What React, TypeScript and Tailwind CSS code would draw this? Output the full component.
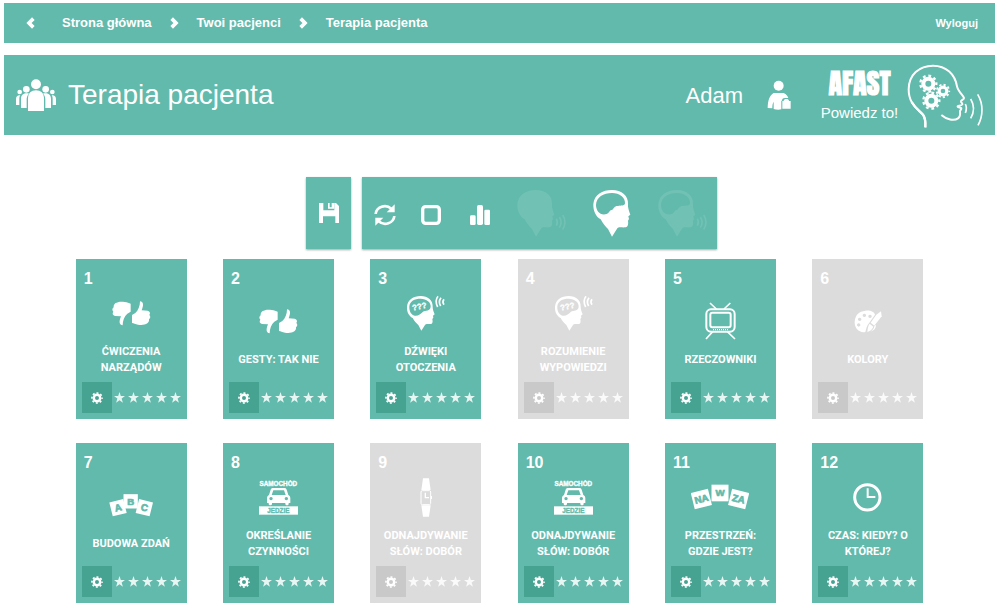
import { Fragment, type ReactNode } from "react";
import clsx from "clsx";

/* ── Icons ── */

function Chevron({ back }: { back?: boolean }) {
  return (
    <svg
      viewBox="0 0 27 36"
      className={clsx("h-3 w-[9px]", back && "rotate-180")}
      aria-hidden="true"
    >
      <path
        d="M5 5l13 13L5 31"
        fill="none"
        stroke="currentColor"
        strokeWidth="11"
      />
    </svg>
  );
}

function Gear({
  cx,
  cy,
  r,
  hole,
  teeth = 8,
}: {
  cx: number;
  cy: number;
  r: number;
  hole: number;
  teeth?: number;
}) {
  const body = r * 0.78;
  return (
    <g fill="none" stroke="currentColor">
      <circle
        cx={cx}
        cy={cy}
        r={(body + hole) / 2}
        strokeWidth={body - hole}
      />
      <circle
        cx={cx}
        cy={cy}
        r={(body + r) / 2}
        strokeWidth={r - body + 1}
        pathLength={teeth * 2}
        strokeDasharray="1 1"
        strokeDashoffset="0.5"
      />
    </g>
  );
}

function PeopleIcon() {
  return (
    <svg
      viewBox="48 236 120 96"
      className="h-8 w-10"
      fill="currentColor"
      aria-hidden="true"
    >
      <circle cx="108" cy="252" r="15" />
      <path d="M84 332V296c0-18 10-26 24-26s24 8 24 26v36z" />
      <circle cx="79" cy="267" r="10" />
      <circle cx="137" cy="267" r="10" />
      <path d="M63 323v-27c0-12 8-17 17-17 3 0 5 0 7 1-5 5-7 11-7 18v25z" />
      <path d="M153 323v-27c0-12-8-17-17-17-3 0-5 0-7 1 5 5 7 11 7 18v25z" />
      <circle cx="59" cy="275" r="7" />
      <circle cx="157" cy="275" r="7" />
      <path d="M48 314v-18c0-8 5-12 13-11-2 3-3 6-3 11v18z" />
      <path d="M168 314v-18c0-8-5-12-13-11 2 3 3 6 3 11v18z" />
    </svg>
  );
}

function PatientIcon() {
  return (
    <svg
      viewBox="289 241 72 90"
      className="h-[30px] w-6"
      fill="currentColor"
      aria-hidden="true"
    >
      <circle cx="324" cy="258" r="15" />
      <path d="M291 325c0-22 6-39 18-45h30c8 4 12 9 14 15h-10c-7 0-9 4-9 8h-2v26c-9 2-15 1-23-1v-22c-3 5-4 11-4 20z" />
      <path d="M335 304h4c0-8 16-8 16 0h5v23h-25z" />
    </svg>
  );
}

function LogoHead() {
  return (
    <svg
      viewBox="712 185 231 195"
      className="h-[65px] w-[77px]"
      fill="none"
      stroke="currentColor"
      aria-hidden="true"
    >
      <path
        d="M767 378c1-16 0-28-7-38-11-12-24-20-34-38-7-12-9-24-9-38 0-44 32-71 73-71 40 0 66 26 72 62 3 16 20 28 21 35 0 6-10 6-9 11 1 4 5 4 4 8-2 4-16 5-14 7 2 3 12 2 11 6-1 5-5 5-4 10 1 8 2 14-6 19-12 8-34 4-50-10"
        strokeWidth="6"
        strokeLinejoin="round"
      />
      <path
        d="M767 378c1-16 0-28-7-38-11-12-24-20-34-38"
        strokeWidth="7"
      />
      <path d="M887 308c4 8 4 18 0 27" strokeWidth="5" />
      <path d="M903 293c11 18 11 39 0 58" strokeWidth="5" />
      <path d="M924 279c17 28 17 64 1 93" strokeWidth="5" />
      <Gear cx={776} cy={247} r={27} hole={9} teeth={9} />
      <Gear cx={820} cy={269} r={21} hole={7} teeth={9} />
      <Gear cx={785} cy={298} r={27} hole={9} teeth={9} />
    </svg>
  );
}

function SaveIcon() {
  return (
    <svg
      viewBox="0 0 60 60"
      className="h-5 w-5"
      fill="currentColor"
      aria-hidden="true"
    >
      <path d="M0 0h13v22h33V0h5l9 9v51H49V40H12v20H0z" />
      <path d="M27 0h5v17h-5zM32 13h9v4h-9zM38 0h8v17h-8z" />
    </svg>
  );
}

function RefreshIcon() {
  return (
    <svg
      viewBox="0 0 66 66"
      className="h-[22px] w-[22px]"
      fill="none"
      stroke="currentColor"
      strokeWidth="8"
      aria-hidden="true"
    >
      <path d="M5 30C7 8 35-1 52 14" />
      <path d="M61 36C59 58 31 67 14 52" />
      <path d="M62 1v24H38z" fill="currentColor" stroke="none" />
      <path d="M4 65V41h24z" fill="currentColor" stroke="none" />
    </svg>
  );
}

function SquareIcon() {
  return (
    <svg viewBox="0 0 60 60" className="h-5 w-5" aria-hidden="true">
      <rect
        x="5"
        y="5"
        width="50"
        height="50"
        rx="9"
        fill="none"
        stroke="currentColor"
        strokeWidth="10"
      />
    </svg>
  );
}

function BarsIcon() {
  return (
    <svg
      viewBox="0 0 60 60"
      className="h-5 w-5"
      fill="currentColor"
      aria-hidden="true"
    >
      <rect x="0" y="31" width="17" height="29" rx="4" />
      <rect x="21" y="0" width="18" height="60" rx="5" />
      <rect x="43" y="14" width="17" height="46" rx="4" />
    </svg>
  );
}

const HEAD =
  "M60 143L48 120C40 112 33 105 26 91C12 84 3 65 4 45C7 17 31 3 60 3C89 3 110 20 108 46C107 56 111 66 115 77L109 82L111 90L108 95C110 109 106 115 99 115C90 116 80 112 76 118Z";
const BRAIN =
  "M44 75C25 81 12 66 12 48C13 24 34 12 60 12C83 12 100 26 99 43C98 52 86 49 78 51C68 50 66 58 60 63C52 62 53 72 44 75Z";

function HeadIcon({
  brain,
  waves,
}: {
  brain?: boolean;
  waves?: boolean;
}) {
  return (
    <svg
      viewBox={waves ? "0 0 150 147" : "0 0 117 147"}
      className={clsx("h-[49px]", waves ? "w-[50px]" : "w-[39px]")}
      aria-hidden="true"
    >
      <path
        d={brain ? HEAD + BRAIN : HEAD}
        fill="currentColor"
        fillRule="evenodd"
      />
      {waves && (
        <g fill="none" stroke="currentColor" strokeWidth="5">
          <path d="M121 89c4 7 4 14 0 21" />
          <path d="M130 84c7 10 7 21 0 32" />
          <path d="M140 78c9 14 9 29 0 43" />
        </g>
      )}
    </svg>
  );
}

function ThumbsIcon() {
  const thumb =
    "M60 42L70 36C79 28 84 15 84 1C94 1 96 12 89 28L107 29C114 31 116 37 112 42C116 46 116 51 111 55C112 61 109 64 106 67C99 72 88 73 78 71C70 70 65 67 60 66Z";
  return (
    <svg
      viewBox="0 0 117 75"
      className="h-[25px] w-[39px]"
      fill="currentColor"
      aria-hidden="true"
    >
      <path d={thumb} />
      <path d={thumb} transform="rotate(180 58 37)" />
    </svg>
  );
}

function QuestionHeadIcon() {
  return (
    <svg viewBox="0 0 117 108" className="h-9 w-[39px]" aria-hidden="true">
      <path
        d="M46 107L37 90C31 83 25 80 20 69C8 62 2 50 3 35C5 14 22 3 44 3C66 3 81 16 80 35C80 43 83 51 86 58L81 62L82 68L79 72C81 83 79 87 73 87C66 88 61 85 57 90ZM26 62C15 60 9 48 10 34C12 18 25 11 44 11C62 11 75 22 74 35C73 49 58 45 51 50C44 56 36 64 26 62Z"
        fill="currentColor"
        fillRule="evenodd"
      />
      <text
        x="18"
        y="43"
        fontSize="24"
        fontWeight="700"
        fill="currentColor"
        stroke="currentColor"
        strokeWidth="1"
        transform="rotate(-12 40 36)"
      >
        ???
      </text>
      <g fill="none" stroke="currentColor" strokeWidth="5">
        <path d="M96 4c-7 9-7 21-1 32" />
        <path d="M105 8c-6 8-6 17-1 25" />
        <path d="M114 13c-4 5-4 11 0 16" />
      </g>
    </svg>
  );
}

function TvIcon() {
  return (
    <svg
      viewBox="0 0 93 114"
      className="h-[38px] w-[31px]"
      fill="none"
      stroke="currentColor"
      aria-hidden="true"
    >
      <rect x="4" y="22" width="85" height="67" rx="14" strokeWidth="6" />
      <rect x="16" y="32" width="61" height="44" rx="6" strokeWidth="6" />
      <path d="M15 3l19 18M76 3L57 21M23 89L3 111M67 89l23 22" strokeWidth="5" />
      <path d="M24 83h46" strokeWidth="4" strokeDasharray="3 3" />
    </svg>
  );
}

function PaletteIcon() {
  return (
    <svg
      viewBox="0 0 84 69"
      className="h-[23px] w-7"
      fill="currentColor"
      aria-hidden="true"
    >
      <path
        fillRule="evenodd"
        d="M34 2C50 0 61 6 63 14L46 38C38 46 36 58 34 66C16 70 1 55 2 36C3 15 15 4 34 2ZM17 23a5 5 0 1 0 .1 0zM31 11a5 5 0 1 0 .1 0zM48 14a5 5 0 1 0 .1 0zM14 40a5 5 0 1 0 .1 0z"
      />
      <path d="M67 14L81 4l2 15-22 28-11-9z" />
      <path d="M47 41l11 9c-4 9-10 13-18 16 1-10 2-18 7-25z" />
      <path d="M66 44c0 11-6 17-16 21 7-5 10-10 11-16z" />
    </svg>
  );
}

function LetterTile({
  x,
  y,
  w,
  h,
  turn = 0,
  children,
}: {
  x: number;
  y: number;
  w: number;
  h: number;
  turn?: number;
  children: string;
}) {
  return (
    <g transform={`translate(${x} ${y}) rotate(${turn})`}>
      <rect x={-w / 2} y={-h / 2} width={w} height={h} fill="currentColor" />
      <text
        y="10"
        textAnchor="middle"
        fontSize="29"
        fontWeight="900"
        strokeWidth="2"
        className="fill-[#61baac] stroke-[#61baac]"
      >
        {children}
      </text>
    </g>
  );
}

function AbcIcon() {
  return (
    <svg viewBox="0 0 132 72" className="h-6 w-11" aria-hidden="true">
      <LetterTile x={27} y={44} w={43} h={43} turn={-14}>
        A
      </LetterTile>
      <LetterTile x={106} y={44} w={43} h={43} turn={14}>
        C
      </LetterTile>
      <LetterTile x={65} y={25} w={43} h={43}>
        B
      </LetterTile>
    </svg>
  );
}

function PlaceIcon() {
  return (
    <svg viewBox="0 0 174 78" className="h-[26px] w-[58px]" aria-hidden="true">
      <LetterTile x={31} y={45} w={53} h={50} turn={-14}>
        NA
      </LetterTile>
      <LetterTile x={143} y={45} w={53} h={50} turn={14}>
        ZA
      </LetterTile>
      <LetterTile x={87} y={27} w={51} h={50}>
        W
      </LetterTile>
    </svg>
  );
}

function CarIcon() {
  return (
    <svg
      viewBox="0 0 117 105"
      className="h-[35px] w-[39px]"
      fill="currentColor"
      aria-hidden="true"
    >
      <text
        x="58"
        y="17"
        textAnchor="middle"
        fontSize="19"
        fontWeight="900"
        stroke="currentColor"
        strokeWidth="1"
      >
        SAMOCHÓD
      </text>
      <path
        fillRule="evenodd"
        d="M42 24h34c4 0 6 2 7 5l5 16c5 3 6 6 6 10v14h-5v3c0 5-10 5-10 0v-3H39v3c0 5-10 5-10 0v-3h-5V55c0-4 1-7 6-10l5-16c1-3 3-5 7-5zM43 31l-5 14h42l-5-14zM36 51a5 5 0 1 0 .1 0zM82 51a5 5 0 1 0 .1 0z"
      />
      <rect x="0" y="79" width="117" height="25" />
      <text
        x="58"
        y="98"
        textAnchor="middle"
        fontSize="19"
        fontWeight="900"
        className="fill-[#61baac] stroke-[#61baac]"
      >
        JEDZIE
      </text>
    </svg>
  );
}

function WatchIcon() {
  return (
    <svg
      viewBox="0 0 36 117"
      className="h-[39px] w-3"
      fill="currentColor"
      aria-hidden="true"
    >
      <path d="M9 1h18l5 35H4zM4 82h28l-5 34H9z" />
      <rect
        x="3"
        y="38"
        width="29"
        height="42"
        rx="4"
        fill="none"
        stroke="currentColor"
        strokeWidth="3"
      />
      <path
        d="M16 44v15h11"
        fill="none"
        stroke="currentColor"
        strokeWidth="4"
      />
      <rect x="33" y="54" width="3" height="9" />
    </svg>
  );
}

function ClockIcon() {
  return (
    <svg
      viewBox="0 0 87 87"
      className="h-[29px] w-[29px]"
      fill="none"
      stroke="currentColor"
      aria-hidden="true"
    >
      <circle cx="43" cy="43" r="38" strokeWidth="9" />
      <path d="M44 16v26h23" strokeWidth="6" />
    </svg>
  );
}

function Stars() {
  return (
    <div
      role="img"
      aria-label="Ocena: 5 gwiazdek"
      className="flex gap-[3px] text-white/85"
    >
      {[1, 2, 3, 4, 5].map((n) => (
        <svg
          key={n}
          viewBox="0 0 30 30"
          className="h-[11px] w-[11px]"
          fill="currentColor"
        >
          <path d="M15 0l3.600 11H30l-9.200 7 3.500 11L15 22.400 5.700 29l3.500-11L0 11h11.400z" />
        </svg>
      ))}
    </div>
  );
}

/* ── Data ── */

const crumbs = ["Strona główna", "Twoi pacjenci", "Terapia pacjenta"];

type Exercise = {
  id: number;
  name: string;
  icon: ReactNode;
  disabled?: boolean;
};

const exercises: Exercise[] = [
  { id: 1, name: "Ćwiczenia narządów", icon: <ThumbsIcon /> },
  { id: 2, name: "Gesty: tak nie", icon: <ThumbsIcon /> },
  { id: 3, name: "Dźwięki otoczenia", icon: <QuestionHeadIcon /> },
  {
    id: 4,
    name: "Rozumienie wypowiedzi",
    icon: <QuestionHeadIcon />,
    disabled: true,
  },
  { id: 5, name: "Rzeczowniki", icon: <TvIcon /> },
  { id: 6, name: "Kolory", icon: <PaletteIcon />, disabled: true },
  { id: 7, name: "Budowa zdań", icon: <AbcIcon /> },
  { id: 8, name: "Określanie czynności", icon: <CarIcon /> },
  {
    id: 9,
    name: "Odnajdywanie słów: dobór",
    icon: <WatchIcon />,
    disabled: true,
  },
  { id: 10, name: "Odnajdywanie słów: dobór", icon: <CarIcon /> },
  { id: 11, name: "Przestrzeń: gdzie jest?", icon: <PlaceIcon /> },
  { id: 12, name: "Czas: kiedy? o której?", icon: <ClockIcon /> },
];

/* ── Page parts ── */

function ExerciseCard({ id, name, icon, disabled }: Exercise) {
  return (
    <article
      className={clsx(
        "flex h-40 w-[111px] flex-col",
        disabled ? "bg-[#dcdcdc]" : "bg-[#61baac]"
      )}
    >
      <span className="px-2 pt-[10px] text-base leading-5 font-bold">
        {id}
      </span>
      <div className="flex flex-1 flex-col items-center justify-center gap-[7px]">
        <div className="flex h-12 items-center">{icon}</div>
        <h2 className="px-2 text-center font-[Roboto,sans-serif] text-[11px] leading-4 font-bold uppercase">
          {name}
        </h2>
      </div>
      <div className="flex items-center justify-between p-1.5">
        <button
          type="button"
          aria-label={`Ustawienia: ${name}`}
          className={clsx(
            "flex h-[31px] w-[30px] items-center justify-center",
            disabled ? "bg-[#c9c9c9]" : "bg-[#46a392]"
          )}
        >
          <svg viewBox="0 0 36 36" className="h-3 w-3">
            <Gear cx={18} cy={18} r={17} hole={6} />
          </svg>
        </button>
        <Stars />
      </div>
    </article>
  );
}

function ToolButton({
  label,
  className,
  children,
}: {
  label: string;
  className: string;
  children: ReactNode;
}) {
  return (
    <button
      type="button"
      aria-label={label}
      className={clsx("flex h-[72px] items-center justify-center", className)}
    >
      {children}
    </button>
  );
}

export default function App() {
  return (
    <div className="min-h-screen bg-white pt-[3px] pr-1.5 pl-1 font-['Liberation_Sans',Arial,sans-serif] text-white">
      <nav className="flex h-10 items-center bg-[#61baac] pr-[17px] pl-[22px] text-[13px] font-bold">
        <a href="#" aria-label="Wstecz" className="mr-[27px]">
          <Chevron back />
        </a>
        <div className="flex flex-1 items-center gap-[18px]">
          {crumbs.map((crumb, i) => (
            <Fragment key={crumb}>
              {i > 0 && <Chevron />}
              <a href="#">{crumb}</a>
            </Fragment>
          ))}
        </div>
        <a href="#" className="text-[11px]">
          Wyloguj
        </a>
      </nav>

      <header className="mt-3 flex h-20 items-center bg-[#61baac] pr-[11px] pl-3">
        <PeopleIcon />
        <h1 className="ml-3 flex-1 text-[28px]">Terapia pacjenta</h1>
        <span className="text-[22px]">Adam</span>
        <span className="mr-7 ml-6">
          <PatientIcon />
        </span>
        <div className="mr-[7px] w-[81px] pb-1.5 text-center">
          <div className="font-[Impact,Anton,Roboto,sans-serif] text-[28px] leading-[42px] font-black">
            AFAST
          </div>
          <div className="text-[15px] leading-[18px]">Powiedz to!</div>
        </div>
        <LogoHead />
      </header>

      <main>
        <div className="mt-[42px] flex justify-center gap-[11px] pl-6">
          <ToolButton
            label="Zapisz"
            className="w-[45px] bg-[#61baac] shadow-[0_1px_2px_rgba(0,0,0,0.35)]"
          >
            <SaveIcon />
          </ToolButton>
          <div className="flex bg-[#61baac] shadow-[0_1px_2px_rgba(0,0,0,0.35)]">
            <ToolButton label="Odśwież" className="w-[46px] pt-1">
              <RefreshIcon />
            </ToolButton>
            <ToolButton label="Odznacz" className="w-[46px] pt-1">
              <SquareIcon />
            </ToolButton>
            <ToolButton label="Statystyki" className="w-[52px] pt-1">
              <BarsIcon />
            </ToolButton>
            <ToolButton label="Mowa" className="w-[70px] text-white/10">
              <HeadIcon waves />
            </ToolButton>
            <ToolButton label="Rozumienie" className="w-[70px]">
              <HeadIcon brain />
            </ToolButton>
            <ToolButton
              label="Mowa i rozumienie"
              className="w-[71px] text-white/10"
            >
              <HeadIcon brain waves />
            </ToolButton>
          </div>
        </div>

        <div className="mx-auto mt-2.5 grid max-w-[884px] grid-cols-[repeat(auto-fill,minmax(140px,1fr))] justify-items-center gap-y-6">
          {exercises.map((exercise) => (
            <ExerciseCard key={exercise.id} {...exercise} />
          ))}
        </div>
      </main>
    </div>
  );
}
